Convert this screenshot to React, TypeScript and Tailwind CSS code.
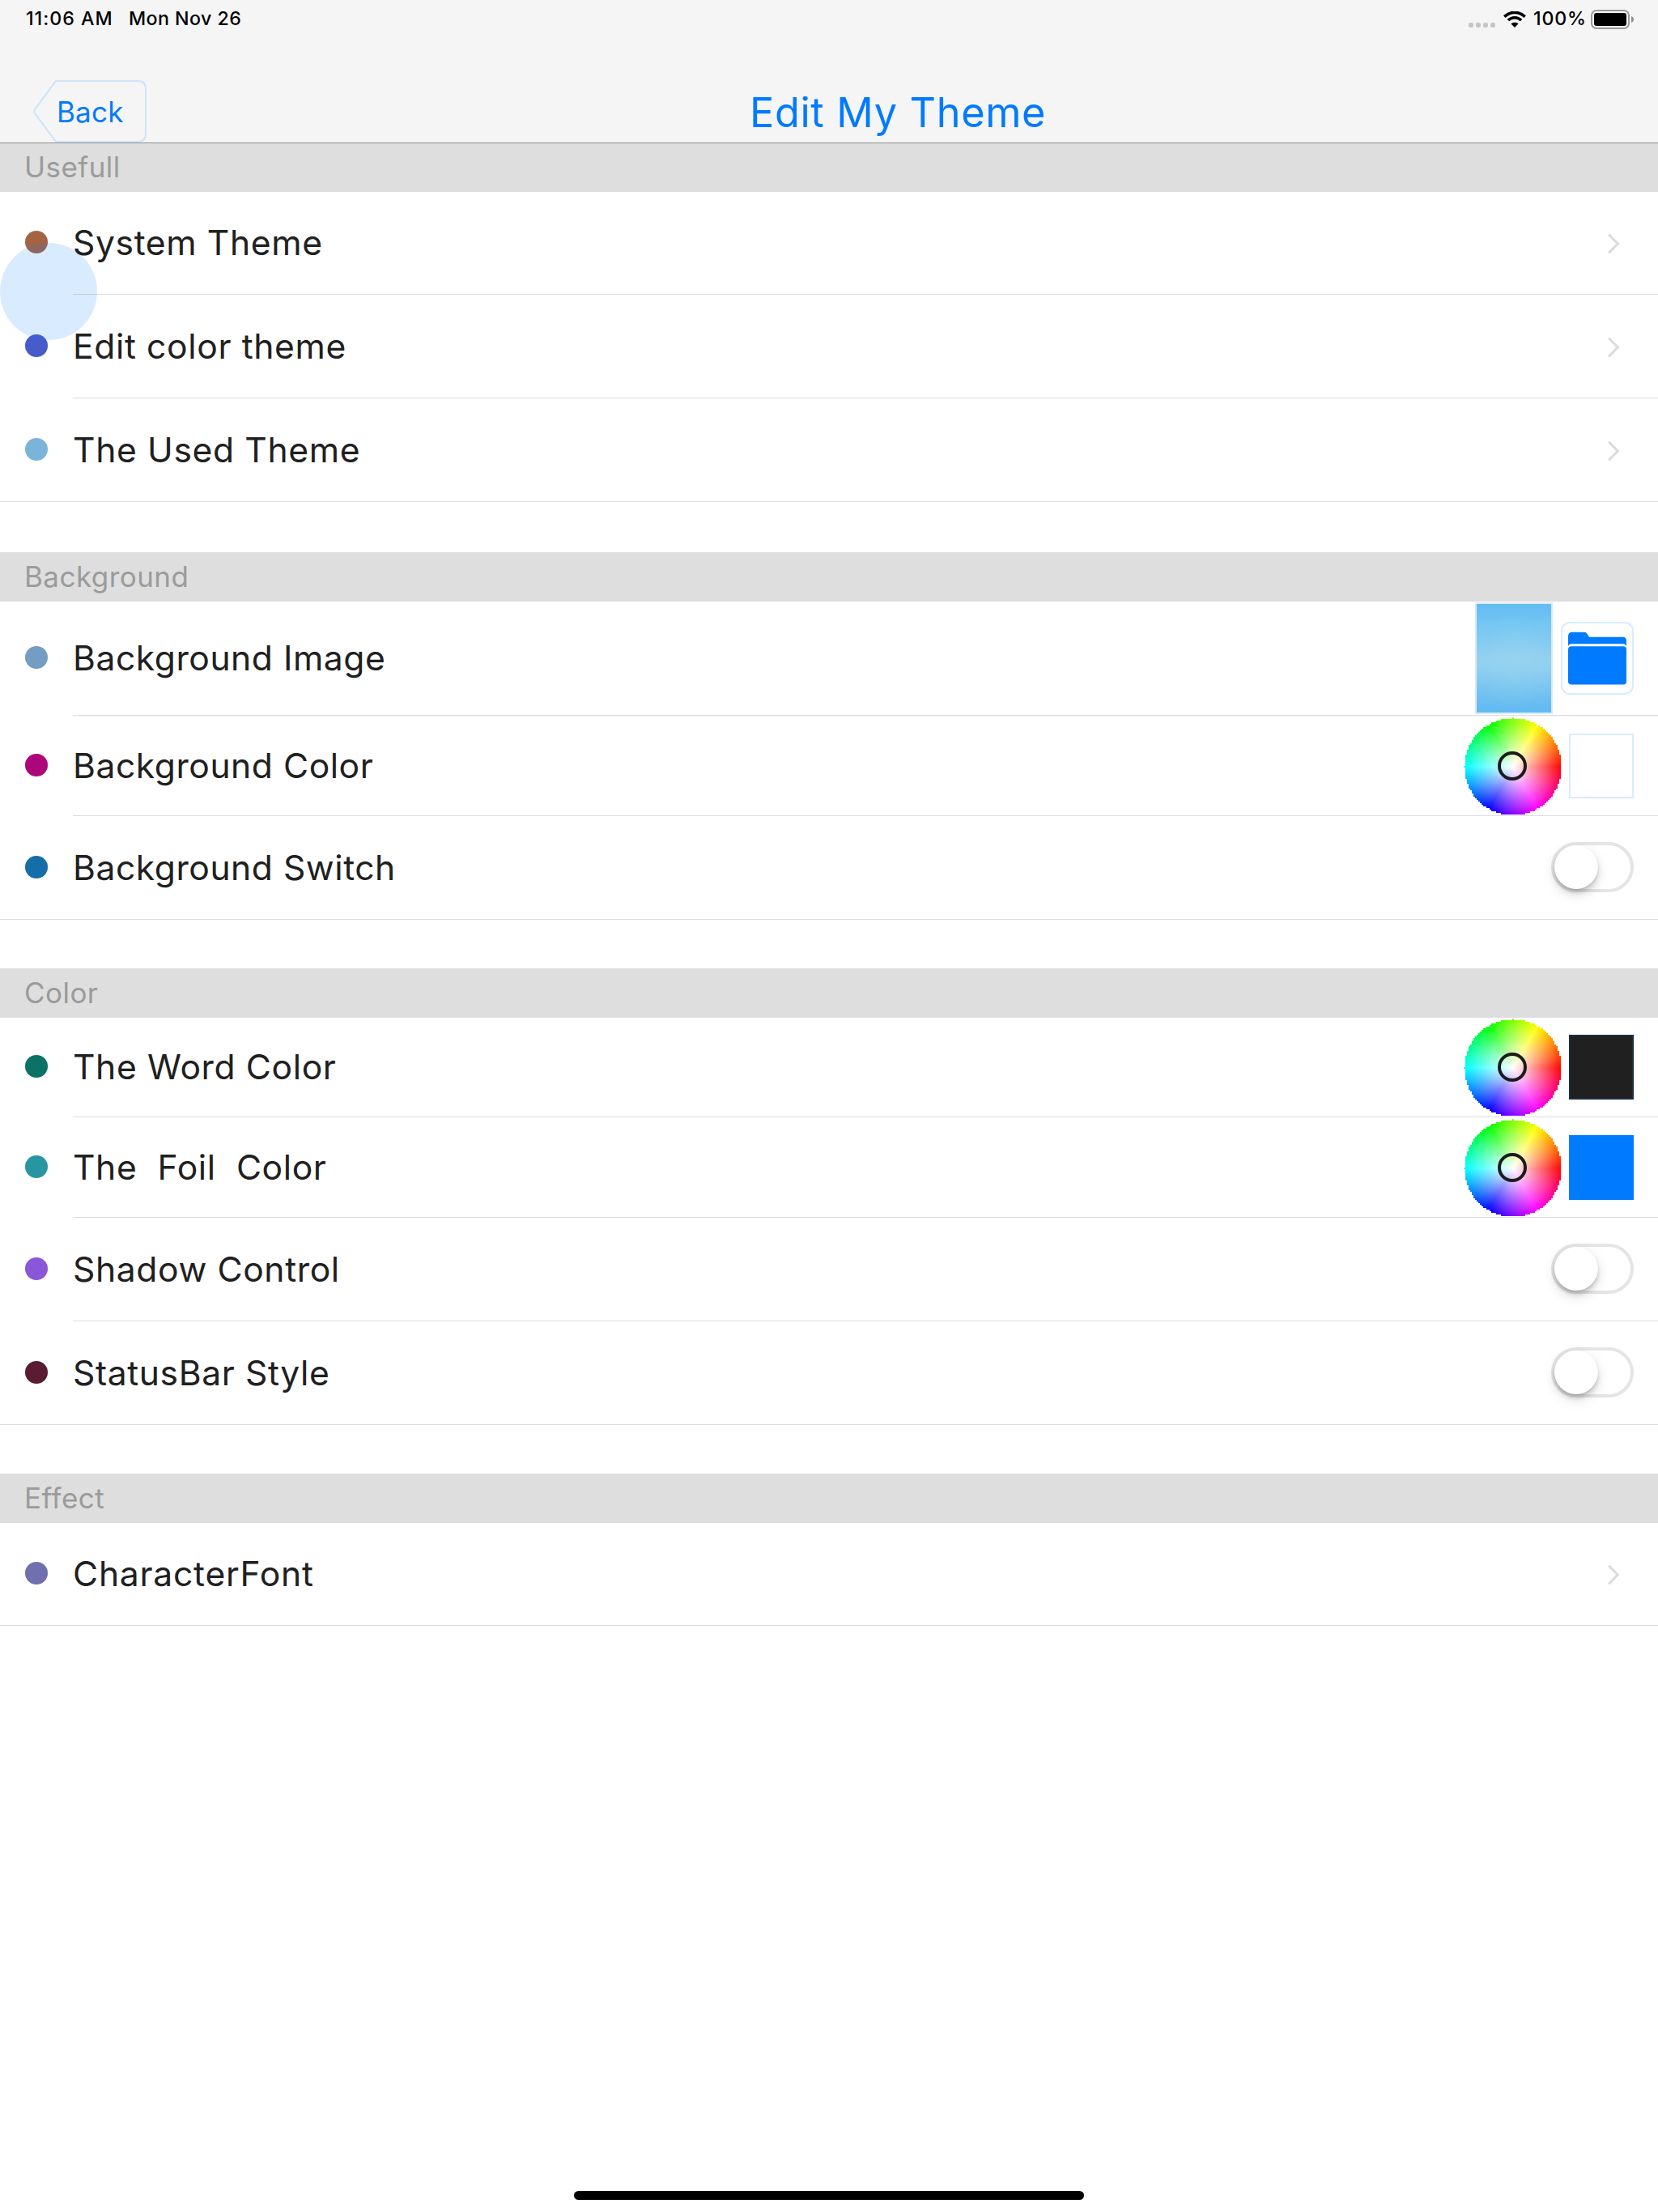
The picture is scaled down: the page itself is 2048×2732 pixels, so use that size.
import React from "react";
import clsx from "clsx";

type Control =
  | { kind: "link" }
  | { kind: "switch" }
  | { kind: "image" }
  | { kind: "color"; swatch: string };

type Item = {
  label: string;
  dot: string;
  height: string;
  control: Control;
};

type Section = {
  title: string;
  header: string;
  tracking: string;
  items: Item[];
};

const sections: Section[] = [
  {
    title: "Usefull",
    header: "h-[60px] pb-0.5",
    tracking: "tracking-[0.64px]",
    items: [
      { label: "System Theme", dot: "bg-[#a46343]", height: "h-32", control: { kind: "link" } },
      { label: "Edit color theme", dot: "bg-[#475bc9]", height: "h-32", control: { kind: "link" } },
      { label: "The Used Theme", dot: "bg-[#7bb4d9]", height: "h-32", control: { kind: "link" } },
    ],
  },
  {
    title: "Background",
    header: "h-[61px] mt-[62px]",
    tracking: "tracking-[0.55px]",
    items: [
      { label: "Background Image", dot: "bg-[#759cc3]", height: "h-[142px]", control: { kind: "image" } },
      { label: "Background Color", dot: "bg-[#ab077b]", height: "h-[124px]", control: { kind: "color", swatch: "bg-white" } },
      { label: "Background Switch", dot: "bg-[#156ea8]", height: "h-32", control: { kind: "switch" } },
    ],
  },
  {
    title: "Color",
    header: "h-[61px] mt-[60px]",
    tracking: "tracking-[0.62px]",
    items: [
      { label: "The Word Color", dot: "bg-[#0c7265]", height: "h-[124px]", control: { kind: "color", swatch: "bg-[#202020]" } },
      { label: "The  Foil  Color", dot: "bg-[#2896a1]", height: "h-[124px]", control: { kind: "color", swatch: "bg-[#007aff]" } },
      { label: "Shadow Control", dot: "bg-[#8a57d9]", height: "h-32", control: { kind: "switch" } },
      { label: "StatusBar Style", dot: "bg-[#591c33]", height: "h-32", control: { kind: "switch" } },
    ],
  },
  {
    title: "Effect",
    header: "h-[61px] mt-[60px]",
    tracking: "tracking-[0.77px]",
    items: [
      { label: "CharacterFont", dot: "bg-[#7170ae]", height: "h-32", control: { kind: "link" } },
    ],
  },
];

// Outline of a disc drawn on a 60x60 grid of 2px cells
const wheelPath = (() => {
  const n = 60;
  const c = 30;
  let d = "";
  for (let j = 0; j < n; j++) {
    const half = Math.floor(Math.sqrt(c * c - (j - c) * (j - c)));
    const x0 = Math.max(0, c - half) * 2;
    const x1 = Math.min(n, c + half + 1) * 2;
    d += `M${x0} ${j * 2}H${x1}V${j * 2 + 2}H${x0}Z`;
  }
  return `path("${d}")`;
})();

const StatusBar = () => {
  return (
    <div className="flex h-12 items-center pl-8 pr-[29px] text-[23.2px] font-[450] leading-none text-black">
      <span className="w-[127px] tracking-[1px]">11:06 AM</span>
      <span className="tracking-[0.45px]">Mon Nov 26</span>
      <div className="ml-auto flex items-center">
        <div className="mt-3.5 mr-2.5 flex gap-[3px]">
          {[0, 1, 2, 3].map((i) => (
            <span key={i} className="size-1.5 rounded-[2px] bg-[#c6c6c6]" />
          ))}
        </div>
        <svg width="28" height="20" viewBox="0 0 28 20" className="mr-[9px]" fill="none">
          <path d="M1.3 6.6C8.4 -0.4 19.6 -0.4 26.7 6.6" stroke="#000" strokeWidth="3.6" />
          <path d="M5.9 11.1C10.5 6.7 17.5 6.7 22.1 11.1" stroke="#000" strokeWidth="3.5" />
          <path d="M14 20L9.4 15.3C12 13.1 16 13.1 18.6 15.3Z" fill="#000" />
        </svg>
        <span className="w-[71px] tracking-[0.8px]">100%</span>
        <svg width="54" height="24" viewBox="0 0 54 24">
          <rect x="1" y="1" width="46" height="22" rx="6" fill="none" stroke="#999" strokeWidth="2" />
          <rect x="4" y="4" width="40" height="16" rx="3" fill="#000" />
          <path d="M50 8C52 8.7 53 10.2 53 12C53 13.8 52 15.3 50 16Z" fill="#8c8c8c" />
        </svg>
      </div>
    </div>
  );
};

const NavBar = () => {
  return (
    <div className="flex h-[129px] items-end border-b border-[#8f8f8f]">
      <button className="relative ml-10 h-[77px] w-[142px] shrink-0">
        <svg width="142" height="77" viewBox="0 0 142 77" className="absolute inset-0" fill="none">
          <path
            d="M29 1H130Q140 1 140 11V66Q140 76 130 76H29L2.8 40.6Q1.4 38.5 2.8 36.4Z"
            stroke="#007aff"
            strokeOpacity="0.15"
            strokeWidth="2"
          />
        </svg>
        <span className="relative block pl-[30px] text-left text-[35px] leading-[78px] tracking-[0.22px] text-[#007aff]">
          Back
        </span>
      </button>
      <h1 className="ml-[744px] text-[50.4px] leading-[75px] tracking-[0.66px] text-[#007aff]">
        Edit My Theme
      </h1>
    </div>
  );
};

const ColorWheel = () => {
  return (
    <div className="relative size-[120px]">
      <div
        className="size-full bg-[radial-gradient(circle_60px_at_61px_61px,white,rgba(255,255,255,0)),conic-gradient(from_90deg_at_61px_61px,#f00,#f0f,#00f,#0ff,#0f0,#ff0,#f00)]"
        style={{ clipPath: wheelPath }}
      />
      <span className="absolute top-[42px] left-[42px] size-9 rounded-full border-4 border-[#1c1c1c]" />
    </div>
  );
};

const Folder = () => {
  return (
    <button className="flex size-[90px] items-center justify-center rounded-[11px] border-2 border-[#007aff]/15">
      <svg width="72" height="66" viewBox="0 0 72 66" fill="#007aff">
        <path d="M0 18V6Q0 .7 5 .7H20.5Q22 .7 23 2.2L26 6.8H67.5Q72 6.8 72 11.5V18Q70.8 15.3 67.5 15.3H4.5Q1.2 15.3 0 18Z" />
        <rect y="18.3" width="72" height="47.2" rx="4" />
      </svg>
    </button>
  );
};

const Switch = () => {
  return (
    <div className="mb-0.5 h-[62px] w-[102px] rounded-full border-4 border-[#e5e5e5]">
      <div className="size-[54px] rounded-full bg-white shadow-[0_6px_16px_rgba(0,0,0,0.15),0_5px_5px_rgba(0,0,0,0.12),0_1px_2px_rgba(0,0,0,0.12)]" />
    </div>
  );
};

const RowControl = ({ control }: { control: Control }) => {
  switch (control.kind) {
    case "link":
      return (
        <svg width="16" height="26" viewBox="0 0 16 26" className="mr-4 mt-px" fill="none">
          <path d="M1.2 1.6L12.2 13L1.2 24.4" stroke="#dcdcdc" strokeWidth="3.2" />
        </svg>
      );
    case "switch":
      return <Switch />;
    case "image":
      return (
        <div className="flex items-center gap-2.5">
          <div className="h-[138px] w-24 border-2 border-[#d8eaff] bg-[radial-gradient(ellipse_at_50%_55%,rgba(165,218,240,0.2),transparent_60%),linear-gradient(#62bbf1,#74c6f3_18%,#93d1ef_50%,#8fcff0_60%,#62bbf1_96%)]" />
          <Folder />
        </div>
      );
    case "color":
      return (
        <div className="flex items-center gap-2.5">
          <ColorWheel />
          <span className={clsx("size-20 border-2 border-[#007aff]/15", control.swatch)} />
        </div>
      );
  }
};

export default function App() {
  return (
    <div className="relative flex h-[2732px] w-[2048px] flex-col overflow-hidden bg-white font-['Inter',sans-serif]">
      <header className="bg-[#f5f5f5]">
        <StatusBar />
        <NavBar />
      </header>
      <div className="flex flex-col">
        {sections.map((section) => (
          <section key={section.title}>
            {/* header covers the first pixel of the row below */}
            <h2
              className={clsx(
                "relative z-10 -mb-px flex items-center bg-[#dedede] pl-[30px] text-[35px] leading-none tracking-[0.45px] text-[#9b9b9b]",
                section.header
              )}
            >
              {section.title}
            </h2>
            {section.items.map((item, idx) => (
              <div key={item.label} className={clsx("flex flex-col", item.height)}>
                <div className="-mb-px flex flex-1 items-center pr-[30px]">
                  <span className={clsx("mb-0.5 ml-[31px] size-7 rounded-full", item.dot)} />
                  <span
                    className={clsx(
                      "mt-px ml-[31px] flex-1 text-[42.6px] leading-none whitespace-pre text-[#202020]",
                      section.tracking
                    )}
                  >
                    {item.label}
                  </span>
                  <RowControl control={item.control} />
                </div>
                <div
                  className={clsx(
                    "h-px shrink-0 bg-[#dcdcdc]",
                    idx < section.items.length - 1 && "ml-[90px]"
                  )}
                />
              </div>
            ))}
          </section>
        ))}
      </div>
      <div className="mx-auto mt-auto mb-[15px] h-[11px] w-[630px] rounded-full bg-black" />
      {/* floating assistive button */}
      <div className="absolute top-[300px] left-0 z-20 size-[120px] rounded-full bg-[#007aff]/15" />
    </div>
  );
}
